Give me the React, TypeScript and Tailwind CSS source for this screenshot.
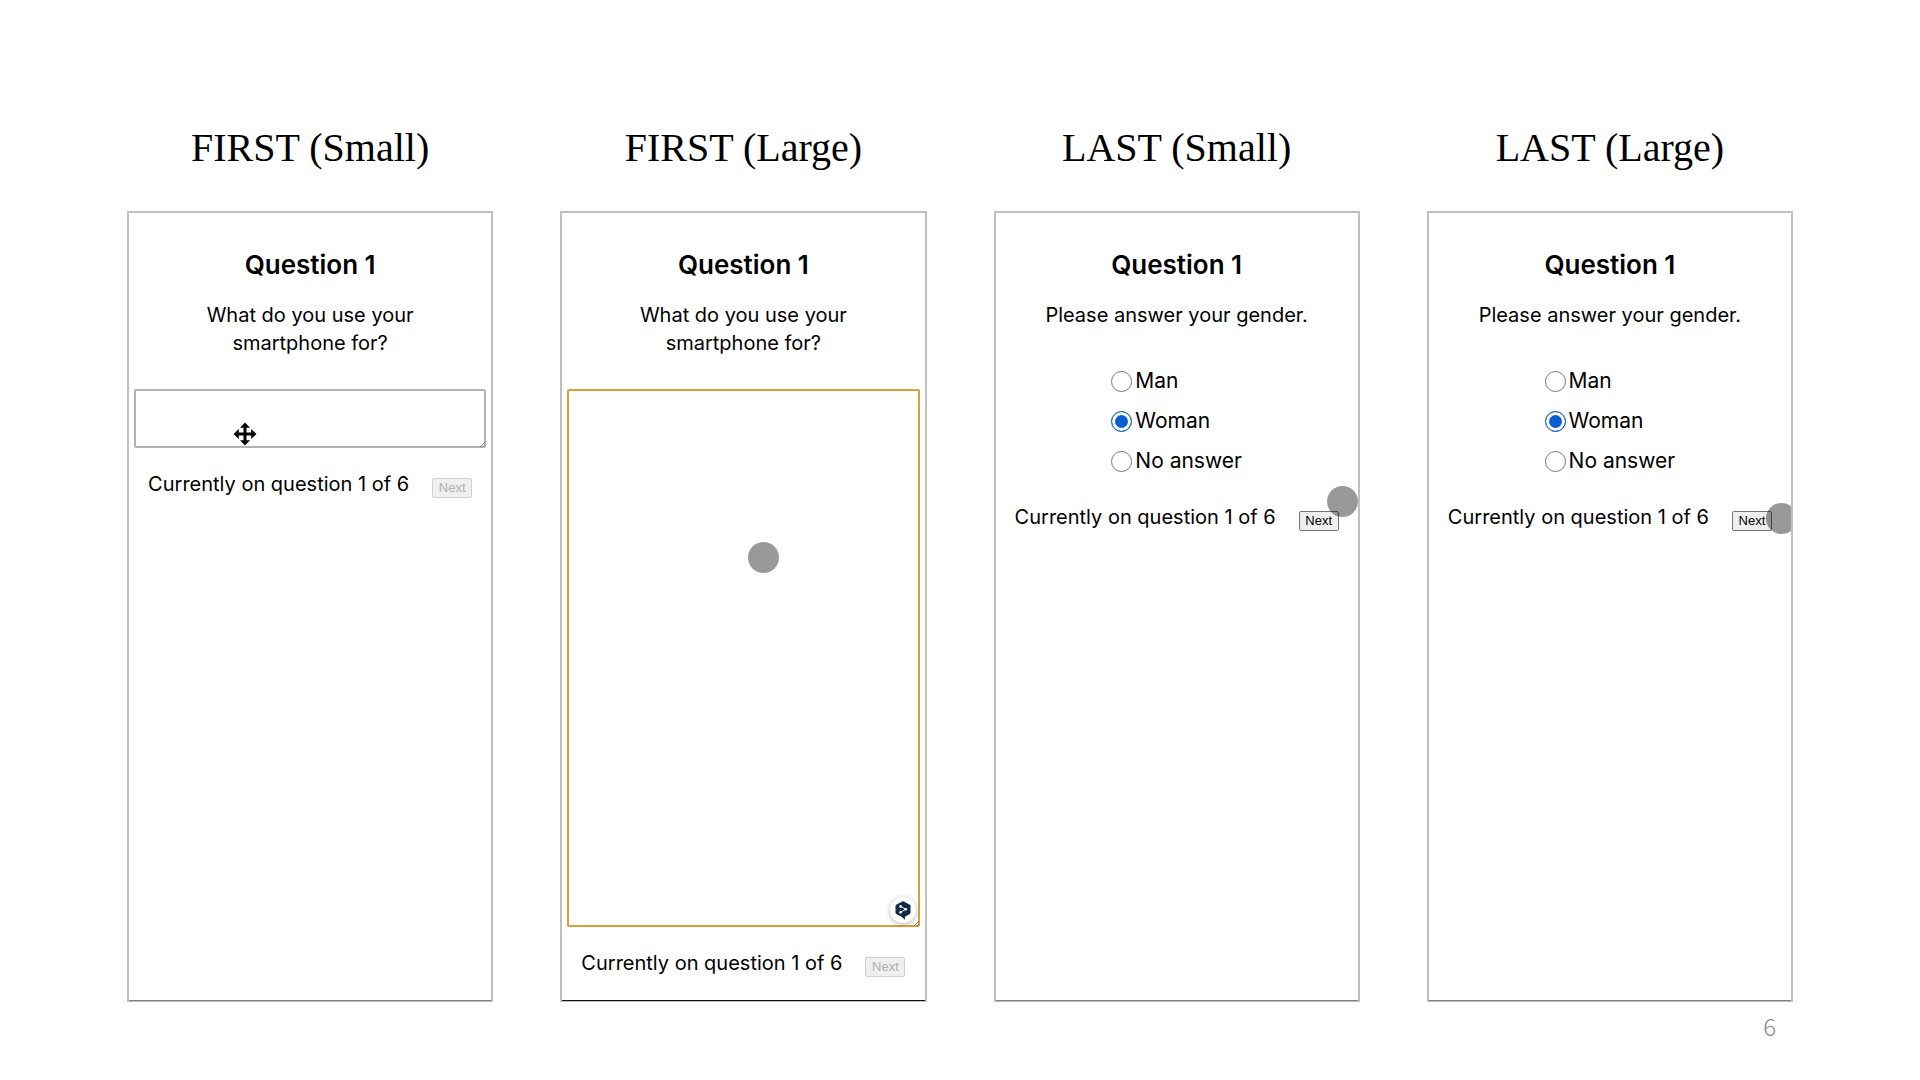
import React, { useState } from 'react';

const GENDERS = ['Man', 'Woman', 'No answer'];

const Dot: React.FC<{ className: string }> = ({ className }) => (
  <span className={`absolute size-[31px] rounded-full bg-black/40 pointer-events-none ${className}`} />
);

const MoveCursor: React.FC = () => (
  <svg className="absolute left-[28%] bottom-[2px] size-6 pointer-events-none" viewBox="0 0 24 24" aria-hidden="true">
    <path
      fill="#000"
      d="M12 0.5 L17 5.8 H13.5 V10.5 H18.2 V7 L23.5 12 L18.2 17 V13.5 H13.5 V18.2 H17 L12 23.5 L7 18.2 H10.5 V13.5 H5.8 V17 L0.5 12 L5.8 7 V10.5 H10.5 V5.8 H7 Z"
    />
  </svg>
);

const ResizeGrip: React.FC = () => (
  <svg className="absolute right-px bottom-px size-[5px] pointer-events-none" viewBox="0 0 5 5" aria-hidden="true">
    <path d="M0 5 L5 0 M3 5 L5 3" stroke="#666" strokeWidth="0.8" />
  </svg>
);

const TranslateBadge: React.FC = () => (
  <span className="absolute right-1 bottom-1 size-[26px] flex items-center justify-center rounded-full bg-white shadow-[0_1px_5px_rgba(0,0,0,0.3)]">
    <svg className="w-4 h-[19px]" viewBox="0 0 16 19" aria-hidden="true">
      <path
        fill="#0f2b46"
        d="M7.2 0.4 Q8 0 8.8 0.4 L14.8 3.8 Q15.5 4.2 15.5 5 V11.8 Q15.5 12.6 14.8 13 L10 15.8 V18.8 L6.6 15.7 L1.2 13 Q0.5 12.6 0.5 11.8 V5 Q0.5 4.2 1.2 3.8 Z"
      />
      <path d="M5.6 5.4 L10.8 8.3 L5.6 11.2" fill="none" stroke="#fff" strokeWidth="0.9" />
      <circle cx="5.6" cy="5.4" r="1.3" fill="#fff" />
      <circle cx="10.8" cy="8.3" r="1.3" fill="#fff" />
      <circle cx="5.6" cy="11.2" r="1.3" fill="#fff" />
    </svg>
  </span>
);

interface ScreenProps {
  label: string;
  prompt: string;
  dark?: boolean;
  disabled?: boolean;
  overlay?: React.ReactNode;
  children: React.ReactNode;
}

const Screen: React.FC<ScreenProps> = ({ label, prompt, dark, disabled, overlay, children }) => (
  <section className="flex flex-col">
    <h2 className="mb-[39px] text-center font-['Liberation_Serif',serif] text-[40px] leading-[48px]">{label}</h2>
    <div
      className={`relative grow overflow-hidden border-2 border-b border-[#bfbfbf] px-[5px] pt-9 pb-6 ${
        dark ? 'shadow-[inset_0_-1px_0_#111]' : 'shadow-[inset_0_-1px_0_#808080]'
      }`}
    >
      <h3 className="text-center text-[26px] leading-8 font-semibold">Question 1</h3>
      <p className="mx-auto mt-5 max-w-[280px] text-center text-[20px] leading-7">{prompt}</p>
      <div className="mt-8">{children}</div>
      <div className="mt-[22px] flex items-end justify-center gap-[23px]">
        <p className="text-[20px] leading-7 whitespace-nowrap">Currently on question 1 of 6</p>
        <button
          type="button"
          disabled={disabled}
          className="h-5 w-10 rounded-xs border border-[#767676] bg-[#efefef] font-['Liberation_Sans',sans-serif] text-[13px] leading-4 disabled:border-[#d0d0d0] disabled:text-[#b0b0b0]"
        >
          Next
        </button>
      </div>
      {overlay}
    </div>
  </section>
);

const GenderOptions: React.FC<{ name: string }> = ({ name }) => {
  const [value, setValue] = useState('Woman');

  return (
    <div className="mx-auto w-fit">
      {GENDERS.map((gender) => (
        <label key={gender} className="flex h-10 items-center gap-[3px] text-[21px] leading-7">
          <input
            type="radio"
            name={name}
            value={gender}
            checked={value === gender}
            onChange={() => setValue(gender)}
            className="size-[21px] appearance-none rounded-full border border-[#767676] bg-white checked:border-[#0a5fd0] checked:bg-[#0a5fd0] checked:shadow-[inset_0_0_0_3px_#fff]"
          />
          {gender}
        </label>
      ))}
    </div>
  );
};

const App: React.FC = () => (
  <main className="min-h-screen bg-white px-[127px] pt-[124px] font-['Inter',sans-serif] text-black">
    <div className="grid grid-cols-4 gap-[67px]">
      <Screen label="FIRST (Small)" prompt="What do you use your smartphone for?" disabled>
        <div className="relative">
          <textarea
            aria-label="Answer"
            className="block h-[59px] w-full resize-none rounded-xs border-2 border-[#b3b3b3]"
          />
          <ResizeGrip />
          <MoveCursor />
        </div>
      </Screen>

      <Screen
        label="FIRST (Large)"
        prompt="What do you use your smartphone for?"
        disabled
        dark
        overlay={<Dot className="top-[329px] left-[186px]" />}
      >
        <div className="relative">
          <textarea
            aria-label="Answer"
            className="block h-[538px] w-full resize-none rounded-xs border-2 border-[#d9a036] outline-none"
          />
          <TranslateBadge />
          <ResizeGrip />
        </div>
      </Screen>

      <Screen
        label="LAST (Small)"
        prompt="Please answer your gender."
        overlay={<Dot className="top-[273px] right-0" />}
      >
        <GenderOptions name="gender-small" />
      </Screen>

      <Screen
        label="LAST (Large)"
        prompt="Please answer your gender."
        overlay={<Dot className="top-[290px] -right-1.5" />}
      >
        <GenderOptions name="gender-large" />
      </Screen>
    </div>
    <footer className="mt-1.5 pr-[17px] text-right font-['Noto_Sans_CJK_JP',sans-serif] text-[24px] leading-9 font-light text-[#8b8b8b]">
      6
    </footer>
  </main>
);

export default App;
